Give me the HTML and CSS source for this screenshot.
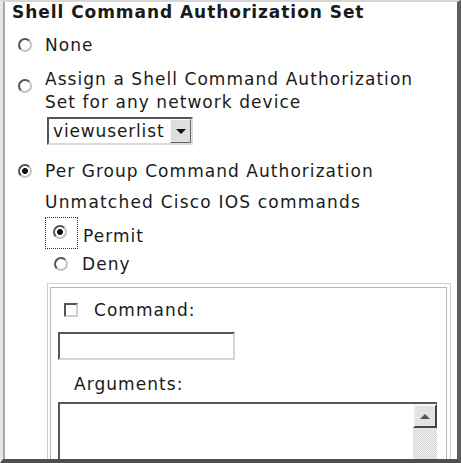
FILE: index.html
```html
<!DOCTYPE html>
<html lang="en">
<head>
    <meta charset="UTF-8">
    <title>Shell Command Authorization Set</title>
    <link rel="stylesheet" href="styles.css">
</head>
<body>
    <div class="frame">
        <div class="title">Shell Command Authorization Set</div>

        <label class="opt opt-none">
            <input type="radio" name="shell">
            <span>None</span>
        </label>

        <label class="opt opt-assign">
            <input type="radio" name="shell">
            <span>Assign a Shell Command Authorization<br>Set for any network device</span>
        </label>

        <div class="select">
            <span class="select-value">viewuserlist</span>
            <span class="select-arrow"></span>
        </div>

        <label class="opt opt-group">
            <input type="radio" name="shell" checked>
            <span>Per Group Command Authorization</span>
        </label>

        <div class="note">Unmatched Cisco IOS commands</div>

        <label class="sub sub-permit">
            <span class="focus"><input type="radio" name="ios" checked></span>
            <span class="sub-text">Permit</span>
        </label>
        <label class="sub sub-deny">
            <input type="radio" name="ios">
            <span>Deny</span>
        </label>

        <div class="cmd-box">
            <div class="cmd-cell">
                <label class="check-row">
                    <input type="checkbox">
                    <span>Command:</span>
                </label>
                <div class="textbox"></div>
                <div class="args-label">Arguments:</div>
                <div class="textarea">
                    <div class="scroll">
                        <span class="scroll-up"></span>
                        <span class="scroll-track"></span>
                    </div>
                </div>
            </div>
        </div>
    </div>
</body>
</html>
```

FILE: styles.css
```css
body { margin: 0; font-family: "DejaVu Sans", Verdana, sans-serif; font-size: 17px; letter-spacing: 1.05px; color: #1a1a1a; }

.frame { width: 461px; height: 463px; box-sizing: border-box; overflow: hidden; background: #fff; border-style: solid; border-width: 2px 4px 4px 3px; border-color: #d6d6d6 #5e5e5e #4e4e4e #e6e6e6; box-shadow: inset 2px 0 0 #a8a8a8; }

.title { margin-left: 9px; line-height: 20px; font-weight: bold; letter-spacing: 0.95px; }

/* radios and checkboxes, classic sunken look */
input[type="radio"], input[type="checkbox"] { appearance: none; -webkit-appearance: none; margin: 0; flex: none; width: 14px; height: 14px; box-sizing: border-box; border: 2px solid; border-color: #555 #c4c4c4 #c4c4c4 #555; background: #fff; }
input[type="radio"] { border-radius: 50%; }
input[type="radio"]:checked { background: radial-gradient(circle, #111 0 2.6px, #fff 3.3px); }

.opt { display: flex; align-items: center; gap: 13px; padding-left: 15px; line-height: 24px; }
.opt-none { margin-top: 11px; }
.opt-assign { align-items: flex-start; margin-top: 11px; line-height: 23px; }
.opt-assign input { margin-top: 11px; }
.opt-group { margin-top: 14px; }

.select { display: flex; width: 146px; height: 28px; box-sizing: border-box; margin: 3px 0 0 44px; border: 2px solid; border-color: #555 #dcdcdc #dcdcdc #555; letter-spacing: 0.85px; }
.select-value { flex: 1; padding-left: 4px; line-height: 24px; }
.select-arrow { width: 21px; box-sizing: border-box; background: #dedede; border: 1px solid; border-color: #fafafa #666 #666 #fafafa; display: flex; align-items: center; justify-content: center; }
.select-arrow::before { content: ""; border-left: 5px solid transparent; border-right: 5px solid transparent; border-top: 5px solid #111; }

.note { margin: 7px 0 0 42px; line-height: 24px; letter-spacing: 1.2px; }

.sub { display: flex; line-height: 24px; }
.sub-permit { align-items: flex-start; margin: 3px 0 0 42px; }
.focus { display: block; padding: 7px 10px 9px 7px; border: 1px dotted #333; }
.focus input { display: block; }
.sub-text { margin: 7px 0 0 5px; }
.sub-deny { align-items: center; gap: 14px; margin: 3px 0 0 51px; }

.cmd-box { width: 404px; box-sizing: border-box; margin: 7px 0 0 44px; padding: 3px 3px 0 2px; border: 1px solid #cfcfcf; }
.cmd-cell { height: 300px; border: 1px solid #b6b6b6; padding-top: 10px; }

.check-row { display: flex; align-items: center; gap: 16px; margin-left: 13px; line-height: 24px; }
.check-row input { border-color: #555 #cfcfcf #cfcfcf #555; }

.textbox { width: 177px; height: 28px; box-sizing: border-box; margin: 10px 0 0 7px; border: 2px solid; border-color: #555 #d6d6d6 #d6d6d6 #555; }

.args-label { margin: 12px 0 0 23px; line-height: 24px; }

.textarea { display: flex; justify-content: flex-end; width: 379px; height: 90px; box-sizing: border-box; margin: 6px 0 0 7px; border: 2px solid; border-color: #555 #d6d6d6 #d6d6d6 #555; border-right: none; }
.scroll { display: flex; flex-direction: column; width: 24px; }
.scroll-up { height: 24px; box-sizing: border-box; background: #e2e2e2; border: 2px solid; border-color: #f6f6f6 #444 #444 #f6f6f6; display: flex; align-items: center; justify-content: center; }
.scroll-up::before { content: ""; border-left: 5px solid transparent; border-right: 5px solid transparent; border-bottom: 5px solid #555; }
.scroll-track { flex: 1; background: repeating-conic-gradient(#d4d4d4 0 25%, #f2f2f2 0 50%) 0 0 / 2px 2px; }
```
